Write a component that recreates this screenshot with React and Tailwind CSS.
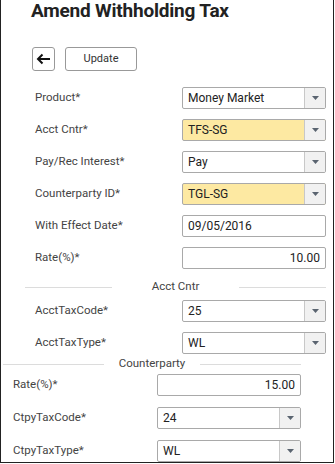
import React from "react";

const Caret = () => (
  <svg width="7" height="4" viewBox="0 0 7 4">
    <path d="M0 0 L7 0 L3.5 4 Z" fill="#5a6470" />
  </svg>
);

const Field = ({ value, yellow, select, right }) => (
  <div
    className={`w-[144px] h-[22px] flex border border-[#a9a9a9] rounded-[2px] overflow-hidden ${
      yellow ? "bg-[#fde9a2]" : "bg-white"
    }`}
  >
    <div
      className={`flex-1 flex items-center px-[5px] text-[12px] text-[#222] ${
        right ? "justify-end" : ""
      }`}
    >
      {value}
    </div>
    {select && (
      <div className="w-[21px] flex items-center justify-center border-l border-[#c8c8c8] bg-[#f1f1f1]">
        <Caret />
      </div>
    )}
  </div>
);

const Row = ({ label, ...rest }) => (
  <div className="flex items-center justify-between h-[22px]">
    <span className="text-[11.5px] text-[#444]">{label}</span>
    <Field {...rest} />
  </div>
);

const Divider = ({ label, cls, pad }) => (
  <div className={`flex items-center ${cls}`}>
    <div className="flex-1 h-px bg-[#dcdcdc]" />
    <span className={`text-[11.5px] text-[#444] ${pad}`}>{label}</span>
    <div className="flex-1 h-px bg-[#dcdcdc]" />
  </div>
);

export default function App() {
  return (
    <div
      className="w-[334px] h-[463px] border border-t-0 border-[#222] bg-white overflow-hidden"
      style={{ fontFamily: "Roboto, 'Liberation Sans', sans-serif" }}
    >
      <h1 className="pl-[30px] text-[19px] leading-[22px] font-bold text-[#222] tracking-[-0.2px]">
        Amend Withholding Tax
      </h1>

      <div className="flex gap-[10px] pl-[31px] mt-[25px]">
        <button className="w-[23px] h-[24px] flex items-center justify-center border border-[#999] rounded-[3px] bg-white">
          <svg width="15" height="12" viewBox="0 0 15 12">
            <path
              d="M14 6 H2 M6.5 1.5 L2 6 L6.5 10.5"
              stroke="#111"
              strokeWidth="2"
              fill="none"
            />
          </svg>
        </button>
        <button className="w-[72px] h-[24px] flex items-center justify-center border border-[#999] rounded-[3px] bg-white text-[11px] text-[#333]">
          Update
        </button>
      </div>

      <div className="flex flex-col gap-[10px] pl-[34px] pr-[7px] mt-[16px]">
        <Row label="Product*" value="Money Market" select />
        <Row label="Acct Cntr*" value="TFS-SG" select yellow />
        <Row label="Pay/Rec Interest*" value="Pay" select />
        <Row label="Counterparty ID*" value="TGL-SG" select yellow />
        <Row label="With Effect Date*" value="09/05/2016" />
        <Row label="Rate(%)*" value="10.00" right />
      </div>

      <Divider label="Acct Cntr" cls="ml-[24px] mr-[7px] mt-[11px] h-[14px]" pad="px-[40px]" />

      <div className="flex flex-col gap-[10px] pl-[34px] pr-[7px] mt-[6px]">
        <Row label="AcctTaxCode*" value="25" select />
        <Row label="AcctTaxType*" value="WL" select />
      </div>

      <Divider label="Counterparty" cls="ml-[2px] mr-[32px] mt-[3px] h-[14px]" pad="px-[15px]" />

      <div className="flex flex-col gap-[11px] pl-[12px] pr-[32px] mt-[3px]">
        <Row label="Rate(%)*" value="15.00" right />
        <Row label="CtpyTaxCode*" value="24" select />
        <Row label="CtpyTaxType*" value="WL" select />
      </div>
    </div>
  );
}
